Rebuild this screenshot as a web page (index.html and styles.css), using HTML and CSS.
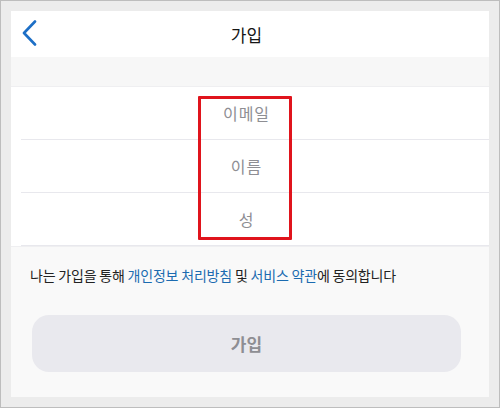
FILE: index.html
```html
<!DOCTYPE html>
<html>
    <head>
        <meta charset="utf-8">
        <link rel="stylesheet" href="styles.css">
    </head>
    <body>
        <div class="frame">
            <div class="screen">
                <div class="topbar">
                    <a class="back">
                        <svg width="16" height="26" viewBox="0 0 16 26">
                            <path d="M13 1.5 L2 13 L13 24.5" fill="none" stroke="#1d6fc6" stroke-width="2.6" stroke-linecap="round" stroke-linejoin="round"/>
                        </svg>
                    </a>
                    <div class="title">가입</div>
                    <span></span>
                </div>
                <div class="band"></div>
                <div class="fields">
                    <div class="row">이메일</div>
                    <div class="row">이름</div>
                    <div class="row">성</div>
                    <div class="mark"></div>
                </div>
                <div class="bottom">
                    <p class="terms">나는 가입을 통해 <a>개인정보 처리방침</a> 및 <a>서비스 약관</a>에 동의합니다</p>
                    <button class="join">가입</button>
                </div>
            </div>
        </div>
    </body>
</html>
```
FILE: styles.css
```css
body {
    margin: 0;
    font-family: "Noto Sans CJK KR", "Noto Sans", sans-serif;
}

.frame {
    width: 500px;
    height: 408px;
    box-sizing: border-box;
    border: 1px solid #bdbdbd;
    background: #ececec;
    padding: 10px;
}

.screen {
    height: 100%;
    display: flex;
    flex-direction: column;
    background: #f9f9f9;
}

.topbar {
    height: 46px;
    background: #fff;
    display: grid;
    grid-template-columns: 40px 1fr 40px;
    align-items: center;
    padding-right: 7px;
}
.back {
    display: flex;
    padding-left: 11px;
    margin-top: -3px;
}
.title {
    text-align: center;
    font-size: 17px;
    color: #151515;
    margin-top: 1px;
}

.band {
    height: 29px;
    background: #f7f7f7;
    border-bottom: 1px solid #efeff1;
}

.fields {
    position: relative;
    background: #fff;
    border-bottom: 1px solid #efeff1;
}
.row {
    height: 53px;
    margin-left: 10px;
    padding-right: 17px;
    display: flex;
    align-items: center;
    justify-content: center;
    font-size: 16px;
    color: #8e8e93;
    letter-spacing: 1px;
    border-bottom: 1px solid #e8e8ed;
    box-sizing: border-box;
}
.row:last-of-type {
    border-bottom: none;
    height: 52px;
}
.mark {
    position: absolute;
    left: 187px;
    top: 9px;
    width: 94px;
    height: 144px;
    box-sizing: border-box;
    border: 3px solid #e0141c;
    border-radius: 1px;
}

.bottom {
    flex: 1;
    padding: 0 28px 0 21px;
}
.terms {
    margin: 18px 0 0 -2px;
    font-size: 14px;
    line-height: 20px;
    letter-spacing: -0.2px;
    color: #222;
}
.terms a {
    color: #1b6bb0;
}
.join {
    display: block;
    width: 100%;
    height: 57px;
    margin-top: 30px;
    border: none;
    border-radius: 17px;
    background: #e9e9ee;
    color: #8e8e93;
    font-family: inherit;
    font-size: 17px;
    font-weight: bold;
}
```
